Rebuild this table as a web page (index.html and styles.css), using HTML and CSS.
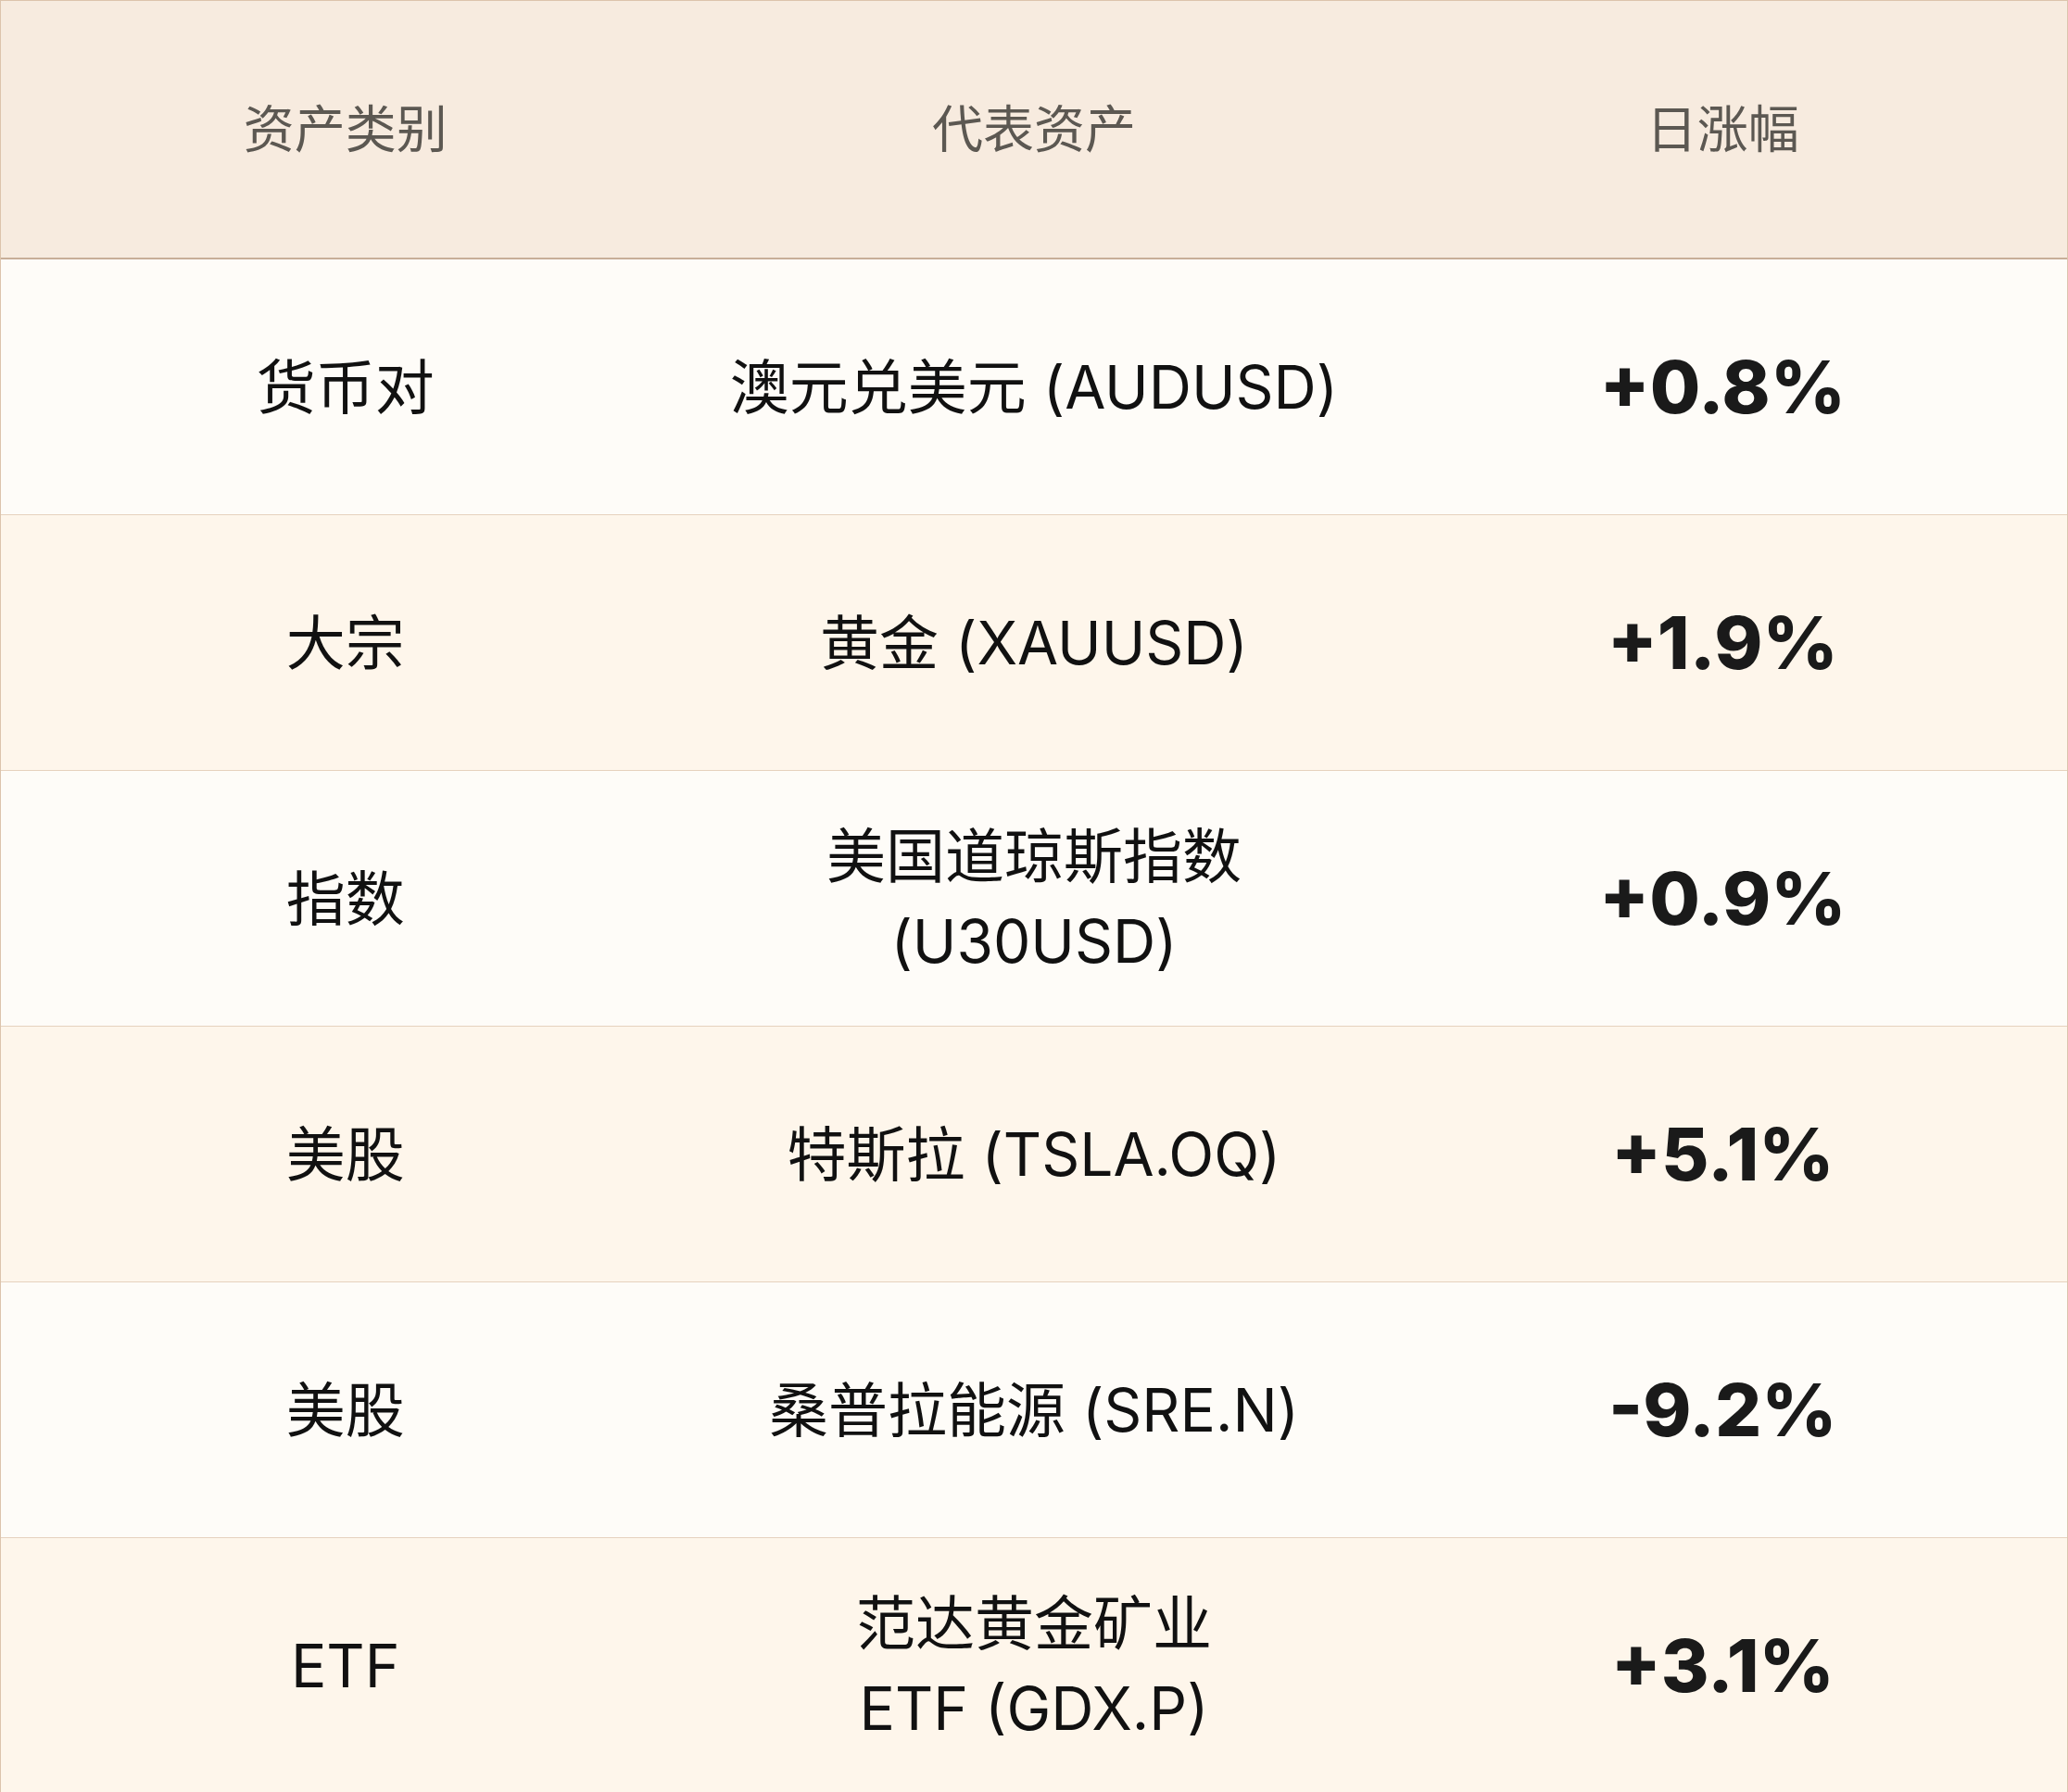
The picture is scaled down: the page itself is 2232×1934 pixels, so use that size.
FILE: index.html
```html
<!DOCTYPE html>
<html lang="zh-CN">
<head>
<meta charset="utf-8">
<link rel="stylesheet" href="styles.css">
</head>
<body>
<div class="table">
  <div class="row head">
    <div class="cell">资产类别</div>
    <div class="cell">代表资产</div>
    <div class="cell">日涨幅</div>
  </div>
  <div class="row odd">
    <div class="cell">货币对</div>
    <div class="cell">澳元兑美元 (AUDUSD)</div>
    <div class="cell pct">+0.8%</div>
  </div>
  <div class="row even">
    <div class="cell">大宗</div>
    <div class="cell">黄金 (XAUUSD)</div>
    <div class="cell pct">+1.9%</div>
  </div>
  <div class="row odd">
    <div class="cell">指数</div>
    <div class="cell"><span class="wrap">美国道琼斯指数<br>(U30USD)</span></div>
    <div class="cell pct">+0.9%</div>
  </div>
  <div class="row even">
    <div class="cell">美股</div>
    <div class="cell">特斯拉 (TSLA.OQ)</div>
    <div class="cell pct">+5.1%</div>
  </div>
  <div class="row odd">
    <div class="cell">美股</div>
    <div class="cell">桑普拉能源 (SRE.N)</div>
    <div class="cell pct">-9.2%</div>
  </div>
  <div class="row even">
    <div class="cell">ETF</div>
    <div class="cell"><span class="wrap">范达黄金矿业<br>ETF (GDX.P)</span></div>
    <div class="cell pct">+3.1%</div>
  </div>
</div>
</body>
</html>
```

FILE: styles.css
```css
html, body {
  margin: 0;
  padding: 0;
  background: #fefcf8;
}
.table {
  width: 2232px;
  box-sizing: border-box;
  border: 1px solid #dcc4ac;
  border-bottom: none;
  font-family: Inter, "Noto Sans CJK SC", sans-serif;
}
.row {
  display: grid;
  grid-template-columns: 1fr 1fr 1fr;
  height: 276px;
  box-sizing: border-box;
  border-bottom: 1px solid #e6d2be;
}
.head {
  height: 279px;
  background: #f7ebdf;
  border-bottom: 2px solid #c8ae98;
}
.odd { background: #fefcf8; }
.even { background: #fef6eb; }
.cell {
  display: flex;
  align-items: center;
  justify-content: center;
  text-align: center;
  font-size: 64px;
  color: #111;
  line-height: 1.43;
}
.head .cell {
  font-size: 55px;
  color: #5c5852;
}
.wrap {
  display: block;
}
.pct {
  font-weight: 800;
  font-size: 79px;
  color: #1a1a1a;
}
```
